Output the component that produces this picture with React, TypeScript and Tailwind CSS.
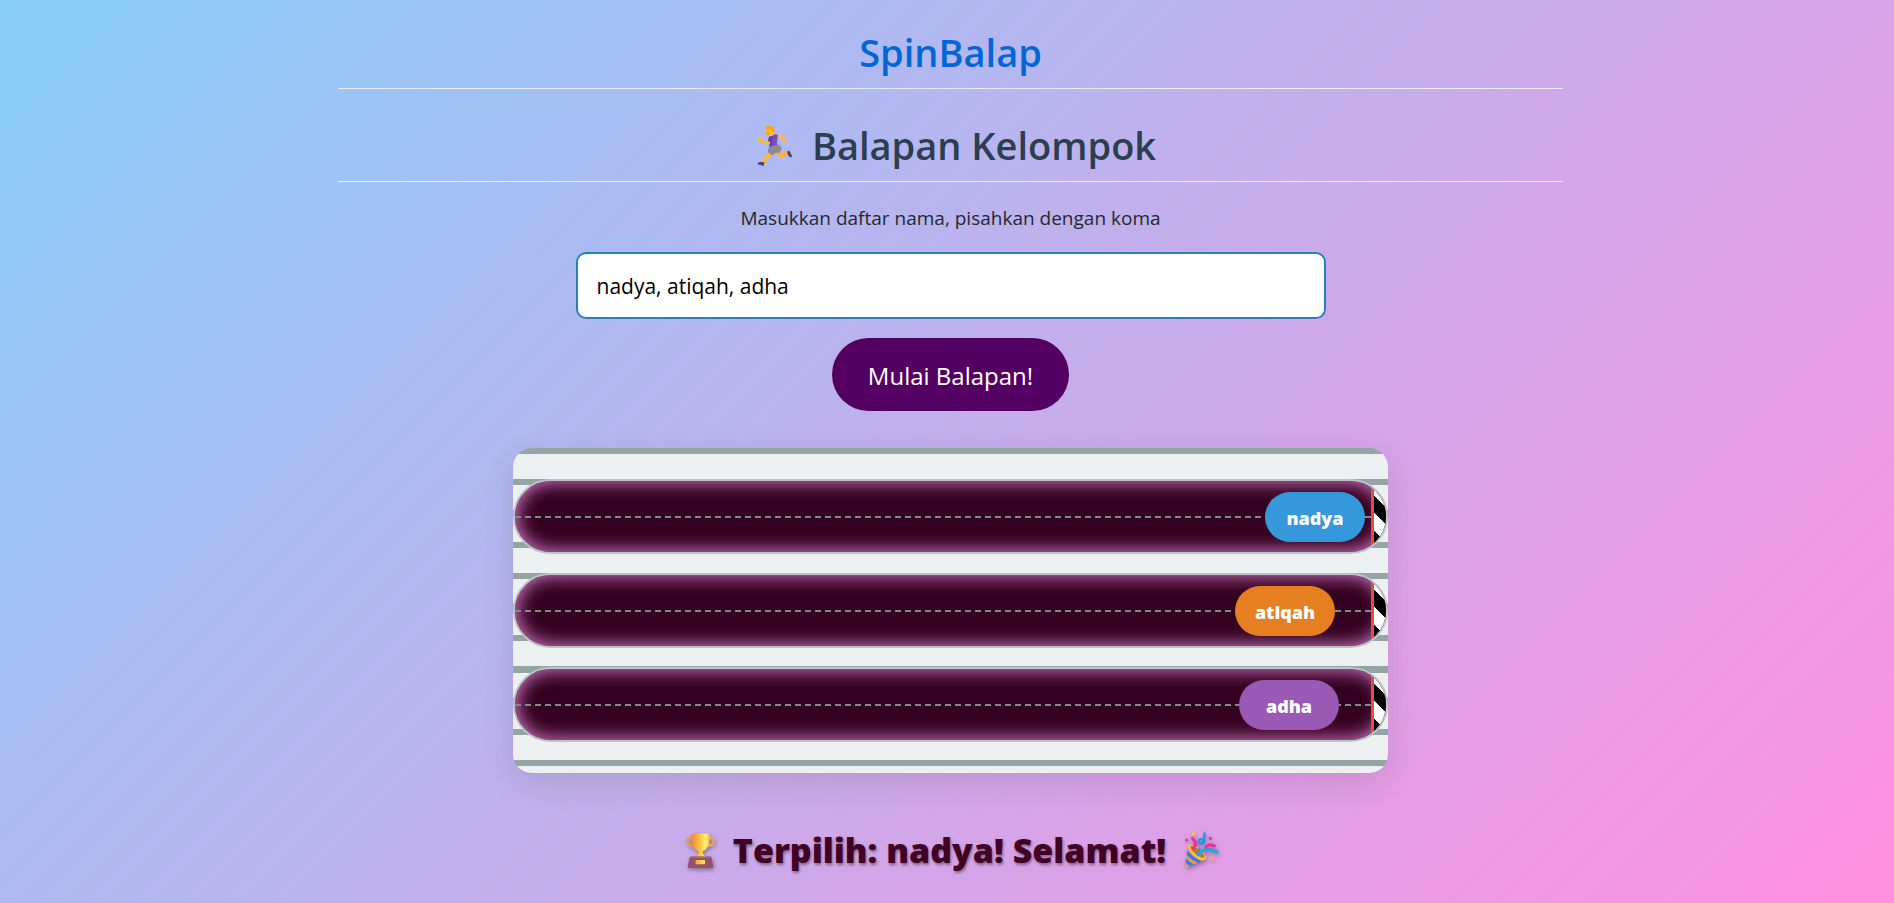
const racers = [
  { name: "nadya", position: 750, color: "bg-[#3498db]" },
  { name: "atiqah", position: 720, color: "bg-[#e67e22]" },
  { name: "adha", position: 724, color: "bg-[#9b59b6]" },
];

function RunnerIcon() {
  return (
    <svg viewBox="0 0 35 40" className="h-10 w-[35px] shrink-0" fill="none" aria-hidden="true">
      <path d="M14.5 27.5 8.8 32 6.6 37" stroke="#ffb92e" strokeWidth="4" strokeLinecap="round" strokeLinejoin="round" />
      <path d="M20 26.5 23.5 29.5 31 27.2" stroke="#fdb528" strokeWidth="4" strokeLinecap="round" strokeLinejoin="round" />
      <path d="M0.6 37.2C2 35.8 5 35.8 7.6 36.6L6.6 39.8 5.2 39.9 4.4 38.9 1 38.6Z" fill="#4b3f78" />
      <path d="M30.2 25.4 32.2 24.6 35 29.8 34.6 31.2 32.9 30.9 30.8 28.9Z" fill="#4b3f78" />
      <path d="M20 10.2 25 10.6 28.4 14.6" stroke="#ffb92e" strokeWidth="3.2" strokeLinecap="round" strokeLinejoin="round" />
      <path d="M12.5 14.5 9 17 5.2 15.6 2.2 13.4" stroke="#ffb92e" strokeWidth="3" strokeLinecap="round" strokeLinejoin="round" />
      <circle cx="2.2" cy="13" r="2" fill="#ffc22f" />
      <path d="M12.4 18.6 20 17.2 25.2 22 22.4 27 18.8 26.4 15.4 29.4 10.8 26Z" fill="#91889a" />
      <path d="M12.2 10.4C15 8 19 7.6 21 9.2L20.4 13 19.8 19 12.4 20.6 13.2 16 11 14.8Z" fill="#7650b4" />
      <path d="M12.2 10.4 15.5 8.6 15 20 12.4 20.6 13.2 16 11 14.8Z" fill="#6442a3" />
      <path d="M9 3.4H17V7.4C17 9 15.4 10.2 13 10.2S9.2 9.2 9.2 7.4Z" fill="#ffc22f" />
      <path d="M8 1.2 10 0 15 0.2C17.6 0.6 18.2 3.2 17 7L15.2 5.8 14.8 3.8 9 3.6Z" fill="#ff9f1c" />
      <circle cx="10.8" cy="5.8" r="0.6" fill="#6a4632" />
      <path d="M10 8.1 12 8.3" stroke="#bf5b28" strokeWidth="0.7" strokeLinecap="round" />
    </svg>
  );
}

function TrophyIcon() {
  return (
    <svg viewBox="0 0 29 35" className="h-[35px] w-[29px] shrink-0 drop-shadow-[1px_2px_2px_rgba(0,0,0,0.35)]" fill="none" aria-hidden="true">
      <defs>
        <linearGradient id="cup" x1="6" y1="0" x2="23" y2="0" gradientUnits="userSpaceOnUse">
          <stop stopColor="#f08d35" />
          <stop offset="0.45" stopColor="#fbbf48" />
          <stop offset="0.8" stopColor="#fff06f" />
          <stop offset="1" stopColor="#fbc24d" />
        </linearGradient>
      </defs>
      <path d="M7 5.2H4C2 5.2 1 6.4 1.3 8.2 1.8 11.2 4.6 13 8.2 13" stroke="#ef9b37" strokeWidth="2" />
      <path d="M22 5.2H25C27 5.2 28 6.4 27.7 8.2 27.2 11.2 24.4 13 20.8 13" stroke="#f4ab3d" strokeWidth="2" />
      <path d="M12.6 16H16.4C16.4 20.5 17.5 22 19.5 24H9.5C11.5 22 12.6 20.5 12.6 16Z" fill="url(#cup)" />
      <path d="M5.6 1.4C5.6 0 23.4 0 23.4 1.4V8C23.4 13.6 19 18.6 14.5 18.6S5.6 13.6 5.6 8Z" fill="url(#cup)" />
      <path d="M4.8 23.6H24.2C25 23.6 25.4 24 25.5 24.6L27.3 34C27.4 34.6 27 35 26.4 35H2.6C2 35 1.6 34.6 1.7 34L3.5 24.6C3.6 24 4 23.6 4.8 23.6Z" fill="#93516b" />
      <path d="M4.2 23.7H24.8L25.2 25H3.8Z" fill="#a9687a" />
      <rect x="9.6" y="27" width="9.4" height="4.2" rx="0.5" fill="url(#cup)" />
    </svg>
  );
}

function PartyIcon() {
  return (
    <svg viewBox="0 0 35 36" className="h-9 w-[35px] shrink-0 drop-shadow-[1px_2px_2px_rgba(0,0,0,0.35)]" fill="none" aria-hidden="true">
      <defs>
        <clipPath id="cone">
          <path d="M4.5 13 1 33.2C0.8 34.8 1.8 35.6 3.4 35.2L21.5 27.5C17 26.5 7 19 4.5 13Z" />
        </clipPath>
      </defs>
      <g clipPath="url(#cone)">
        <path d="M0 10H24V36H0Z" fill="#f5954c" />
        <path d="M1 18C5 24 11 29 19 31M0 26.4C3 30 6.6 33 11 35" stroke="#3479ee" strokeWidth="3.2" />
      </g>
      <ellipse cx="13" cy="20.3" rx="11" ry="4.4" transform="rotate(40 13 20.3)" fill="#ffc44c" />
      <ellipse cx="13.4" cy="19.8" rx="9" ry="2.9" transform="rotate(40 13.4 19.8)" fill="#b97a22" />
      <path d="M9.6 16.6C12.2 12.6 11.8 9 8.4 6.4" stroke="#ee2f93" strokeWidth="3" strokeLinecap="round" />
      <path d="M14 22.6C18.4 17.6 25.4 16.4 33 20" stroke="#27a2ea" strokeWidth="3.2" strokeLinecap="round" />
      <path d="M21.6 15.2C24 12.2 27.4 12.2 30.6 14" stroke="#ee2f93" strokeWidth="2.8" strokeLinecap="round" />
      <path d="M20.6 1.4 19.8 10.2C19 12.6 14.4 11.8 14.8 8.8 15.2 6.6 18.6 6.4 19.4 8.8" stroke="#2497e4" strokeWidth="2.4" strokeLinecap="round" />
      <circle cx="9.6" cy="1.8" r="1.7" fill="#ffc13d" />
      <circle cx="2.6" cy="8" r="1.6" fill="#ee2f93" />
      <circle cx="26.4" cy="6.4" r="1.6" fill="#d936a4" />
      <circle cx="28" cy="26.2" r="1.6" fill="#ffb03b" />
      <circle cx="15.6" cy="17.2" r="1.4" fill="#2497e4" />
    </svg>
  );
}

function Lane({ name, position, color }: { name: string; position: number; color: string }) {
  return (
    <li className="relative h-[75px] overflow-hidden rounded-full border-2 border-[#bdc3c7] bg-[#34001f] shadow-[inset_0_0_19px_#e890e0]">
      <div className="absolute inset-x-0 top-[35px] h-[2px] bg-[repeating-linear-gradient(90deg,#7f8c8d_0_6px,transparent_6px_10px)]" />
      <div className="absolute inset-y-0 right-0 w-[15px] border-l-3 border-[#e74c3c] bg-[repeating-linear-gradient(45deg,#fff_0_3px,#000_3px_15px,#fff_15px_25px)]" />
      <div
        className={`absolute top-[11px] flex h-[50px] w-[100px] items-center justify-center rounded-full pt-[2px] text-[18px] font-extrabold text-white ${color}`}
        style={{ left: position }}
      >
        {name}
      </div>
    </li>
  );
}

export default function App() {
  return (
    <div className="min-h-screen bg-linear-[135deg,#87cefa,#ff8fdf] pl-[7px] font-['Open_Sans','Noto_Sans',sans-serif]">
      <main className="mx-auto flex max-w-[1225px] flex-col items-center pt-[27px] text-center">
        <h1 className="w-full border-b border-[#eaecef] pb-[10px] text-[38px] leading-[51px] font-semibold">
          <a href="#" className="text-[#0366d6]">SpinBalap</a>
        </h1>
        <h2 className="mt-[31px] flex w-full items-center justify-center gap-5 border-b border-[#eaecef] pb-[10px] pl-3 text-[38px] leading-[51px] font-semibold text-[#2c3e50]">
          <RunnerIcon />
          Balapan Kelompok
        </h2>
        <label htmlFor="names" className="mt-[22px] text-[19px] leading-7 text-[#24292e]">
          Masukkan daftar nama, pisahkan dengan koma
        </label>
        <input
          id="names"
          defaultValue="nadya, atiqah, adha"
          className="mt-5 h-[67px] w-full max-w-[750px] rounded-[10px] border-2 border-[#2980b9] bg-white px-[19px] text-[21px] text-black outline-none"
        />
        <button type="button" className="mt-[19px] h-[73px] rounded-full bg-[#540062] px-9 pt-[2px] text-[24px] text-white">
          Mulai Balapan!
        </button>
        <ul className="mt-[37px] flex w-full max-w-[875px] flex-col gap-[19px] rounded-[19px] bg-[repeating-linear-gradient(180deg,#95a5a6_0_1.9%,#ecf0f1_1.9%_9.6%)] py-[31px] shadow-[0_10px_31px_rgba(0,0,0,0.1)]">
          {racers.map((racer) => (
            <Lane key={racer.name} {...racer} />
          ))}
        </ul>
        <p className="mt-[51px] flex items-center gap-[18px] pl-1 text-[34px] leading-[52px] font-extrabold text-[#430027] text-shadow-[1px_2px_3px_rgba(0,0,0,0.4)]">
          <TrophyIcon />
          Terpilih: nadya! Selamat!
          <PartyIcon />
        </p>
      </main>
    </div>
  );
}
